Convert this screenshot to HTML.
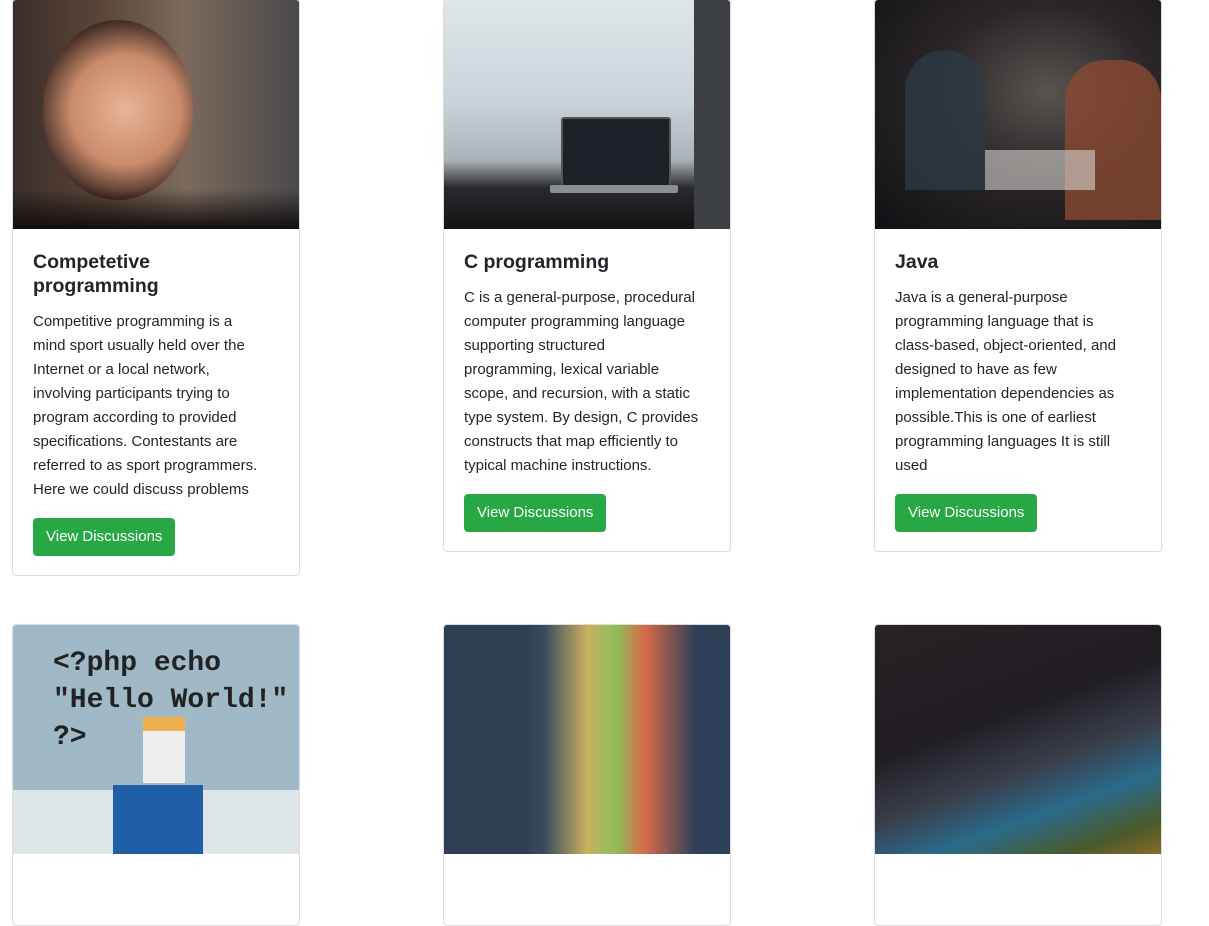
<!DOCTYPE html>
<html><head><meta charset="utf-8"><style>
body{margin:0;width:1209px;height:806px;overflow:hidden;background:#fff;font-family:"Liberation Sans",sans-serif;color:#212529;position:relative}
.card{position:absolute;width:286px;border:1px solid #dcdcdc;border-radius:4px;background:#fff;overflow:hidden}
.img{height:229px;position:relative;overflow:hidden}
.body{padding:0 20px 20px 20px}
h5{margin:21px 0 12px;font-size:19.5px;font-weight:600;line-height:24px;white-space:nowrap}
p{margin:0 0 16px;font-size:15px;line-height:24px;white-space:nowrap}
.btn{display:inline-block;background:#28a745;color:#fff;font-size:15px;line-height:24px;padding:7px 13px;border-radius:4px}
</style></head><body>

<div class="card" style="left:12px;top:-1px;height:575px">
 <div class="img" style="background:linear-gradient(90deg,#3a2e2a 0%,#5a4438 30%,#7c6a5c 60%,#4a4a4c 100%)">
  <div style="position:absolute;left:30px;top:20px;width:150px;height:180px;border-radius:50%;background:radial-gradient(circle at 55% 50%,#e7b596 0%,#c98b6b 45%,#3a2720 75%)"></div>
  <div style="position:absolute;left:0;bottom:0;width:100%;height:40px;background:linear-gradient(#20181a00,#120d0e)"></div>
 </div>
 <div class="body">
  <h5>Competetive<br>programming</h5>
  <p>Competitive programming is a<br>mind sport usually held over the<br>Internet or a local network,<br>involving participants trying to<br>program according to provided<br>specifications. Contestants are<br>referred to as sport programmers.<br>Here we could discuss problems</p>
  <span class="btn">View Discussions</span>
 </div>
</div>

<div class="card" style="left:443px;top:-1px;height:551px">
 <div class="img" style="background:linear-gradient(#dfe6ea 0%,#c8d3d9 45%,#a9b2b6 70%,#2a2a2e 82%,#121214 100%)">
  <div style="position:absolute;left:117px;top:117px;width:106px;height:68px;background:#1c2228;border:2px solid #555;border-radius:3px"></div>
  <div style="position:absolute;left:106px;top:185px;width:128px;height:8px;background:#8a8d92;border-radius:2px"></div>
  <div style="position:absolute;right:0;top:0;width:36px;height:229px;background:#3c3f44"></div>
 </div>
 <div class="body">
  <h5>C programming</h5>
  <p>C is a general-purpose, procedural<br>computer programming language<br>supporting structured<br>programming, lexical variable<br>scope, and recursion, with a static<br>type system. By design, C provides<br>constructs that map efficiently to<br>typical machine instructions.</p>
  <span class="btn">View Discussions</span>
 </div>
</div>

<div class="card" style="left:874px;top:-1px;height:551px">
 <div class="img" style="background:radial-gradient(ellipse at 60% 40%,#5a5350 0%,#2a2628 45%,#121014 100%)">
  <div style="position:absolute;left:190px;top:60px;width:96px;height:160px;background:#8a4a32;border-radius:40px 40px 0 0;opacity:.8"></div>
  <div style="position:absolute;left:30px;top:50px;width:80px;height:140px;background:#2c3a44;border-radius:40px 40px 0 0;opacity:.8"></div>
  <div style="position:absolute;left:110px;top:150px;width:110px;height:40px;background:#d8d6d2;opacity:.6"></div>
 </div>
 <div class="body">
  <h5>Java</h5>
  <p>Java is a general-purpose<br>programming language that is<br>class-based, object-oriented, and<br>designed to have as few<br>implementation dependencies as<br>possible.This is one of earliest<br>programming languages It is still<br>used</p>
  <span class="btn">View Discussions</span>
 </div>
</div>

<div class="card" style="left:12px;top:624px;height:300px">
 <div class="img" style="background:#9fb9c6">
  <div style="position:absolute;left:40px;top:20px;font-family:'Liberation Mono',monospace;font-size:28px;line-height:37px;color:#222;white-space:pre;font-weight:bold">&lt;?php echo
"Hello World!"
?&gt;</div>
  <div style="position:absolute;left:0;top:165px;width:100%;height:64px;background:#dfe6ea"></div>
  <div style="position:absolute;left:130px;top:92px;width:42px;height:52px;background:#eee;border-top:14px solid #f0b050"></div>
  <div style="position:absolute;left:100px;top:160px;width:90px;height:70px;background:#1e5fa8"></div>
 </div>
</div>

<div class="card" style="left:443px;top:624px;height:300px">
 <div class="img" style="background:linear-gradient(90deg,#2e3f55 0%,#2e3f55 28%,#3a4a5e 35%,#c9b060 50%,#8cbf5a 60%,#d96a4a 70%,#2e4058 88%)"></div>
</div>

<div class="card" style="left:874px;top:624px;height:300px">
 <div class="img" style="background:linear-gradient(160deg,#2a2226 0%,#1f1c22 40%,#3a3e4a 60%,#2a6a8a 75%,#4a5a2a 90%,#8a6a2a 100%)"></div>
</div>

</body></html>
